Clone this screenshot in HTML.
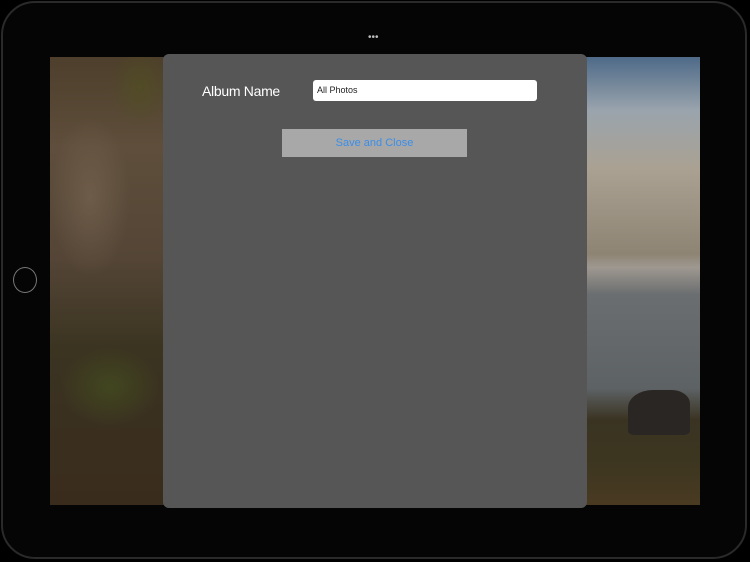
<!DOCTYPE html>
<html><head><style>
body{margin:0;width:750px;height:562px;background:#000;overflow:hidden;position:relative;font-family:"Liberation Sans",sans-serif}
.frame{position:absolute;left:1px;top:1px;width:746px;height:558px;border:2px solid #2a2a2a;border-radius:34px;background:#050505;box-sizing:border-box}
.home{position:absolute;left:13px;top:267px;width:24px;height:26px;border:1.5px solid #777;border-radius:50%;box-sizing:border-box}
.left{position:absolute;left:50px;top:57px;width:114px;height:448px;
background:
radial-gradient(ellipse 40px 80px at 40px 140px,rgba(130,110,90,.5),transparent),
radial-gradient(ellipse 50px 40px at 60px 330px,rgba(70,85,30,.6),transparent),
radial-gradient(ellipse 30px 40px at 90px 30px,rgba(80,80,30,.6),transparent),
linear-gradient(180deg,#4d3f2b 0%,#5e4e3b 20%,#544536 45%,#3b3421 65%,#3a3020 80%,#3a2c1c 100%)}
.right{position:absolute;left:586px;top:57px;width:114px;height:448px;
background:linear-gradient(180deg,#4e6a88 0%,#9aa4ad 12%,#aaa192 25%,#8e8474 44%,#9e9890 47%,#6b6e70 53%,#5d6264 74%,#3a3322 81%,#3c3620 90%,#4a3a22 100%)}
.rock{position:absolute;left:628px;top:390px;width:62px;height:45px;background:#2a2624;border-radius:40% 30% 10% 10%}
.panel{position:absolute;left:163px;top:54px;width:424px;height:454px;background:#565656;border-radius:6px}
.dots{position:absolute;left:368px;top:35px;color:#bbb;font-size:10px;line-height:6px}
.lbl{position:absolute;left:202px;top:83px;color:#fff;font-size:14px;letter-spacing:-0.3px}
.field{position:absolute;left:313px;top:80px;width:224px;height:21px;background:#fff;border-radius:3px;font-size:9px;color:#222;line-height:21px;padding-left:4px;box-sizing:border-box}
.btn{position:absolute;left:282px;top:129px;width:185px;height:28px;background:#a8a8a8;color:#3b8ee8;font-size:11px;text-align:center;line-height:29px}
</style></head><body>
<div class="frame"></div>
<div class="home"></div>
<div class="left"></div>
<div class="right"></div>
<div class="rock"></div>
<div class="dots">•••</div>
<div class="panel"></div>
<div class="lbl">Album Name</div>
<div class="field">All Photos</div>
<div class="btn">Save and Close</div>
</body></html>
